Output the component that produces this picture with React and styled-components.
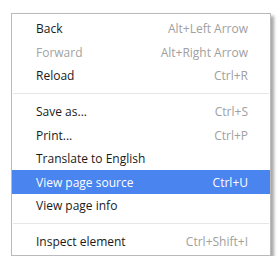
import React from 'react'
import styled, { createGlobalStyle } from 'styled-components'

const GlobalStyle = createGlobalStyle`
  html, body {
    margin: 0;
    padding: 0;
    background: #ffffff;
  }
  body {
    font-family: "Open Sans", "Noto Sans", sans-serif;
  }
`

const menuItems = [
  [
    { label: 'Back', shortcut: 'Alt+Left Arrow' },
    { label: 'Forward', shortcut: 'Alt+Right Arrow', disabled: true },
    { label: 'Reload', shortcut: 'Ctrl+R' },
  ],
  [
    { label: 'Save as...', shortcut: 'Ctrl+S' },
    { label: 'Print...', shortcut: 'Ctrl+P' },
    { label: 'Translate to English' },
    { label: 'View page source', shortcut: 'Ctrl+U', active: true },
    { label: 'View page info' },
  ],
  [
    { label: 'Inspect element', shortcut: 'Ctrl+Shift+I' },
  ],
]

export default function App() {
  return (
    <>
      <GlobalStyle />
      <Page>
        <Menu>
          {menuItems.map((group, gi) => (
            <React.Fragment key={gi}>
              {gi > 0 && <Separator />}
              {group.map((item) => (
                <Item key={item.label} $active={item.active} $disabled={item.disabled}>
                  <Label>{item.label}</Label>
                  {item.shortcut && <Shortcut $active={item.active}>{item.shortcut}</Shortcut>}
                </Item>
              ))}
            </React.Fragment>
          ))}
        </Menu>
      </Page>
    </>
  )
}

const Page = styled.div`
  padding: 13px 0 0 11px;
`

const Menu = styled.div`
  width: 260px;
  height: 243px;
  box-sizing: border-box;
  border: 1px solid #bababa;
  background: #ffffff;
  box-shadow: 3px 3px 3px rgba(0, 0, 0, 0.35);
  padding: 3px 0 1.5px;
  display: flex;
  flex-direction: column;
`

const Item = styled.div`
  height: 23.5px;
  display: flex;
  align-items: center;
  justify-content: space-between;
  padding: 0 22px 0 24px;
  font-size: 12px;
  color: ${(p) => (p.$active ? '#ffffff' : p.$disabled ? '#a3a3a3' : '#1a1a1a')};
  background: ${(p) => (p.$active ? '#4a84ef' : 'transparent')};
`

const Label = styled.span`
  white-space: nowrap;
`

const Shortcut = styled.span`
  white-space: nowrap;
  color: ${(p) => (p.$active ? '#ffffff' : '#a0a0a0')};
`

const Separator = styled.div`
  height: 13px;
  display: flex;
  align-items: center;
  padding: 0 1px;

  &::before {
    content: '';
    flex: 1;
    height: 1px;
    background: #e6e6e6;
  }
`
